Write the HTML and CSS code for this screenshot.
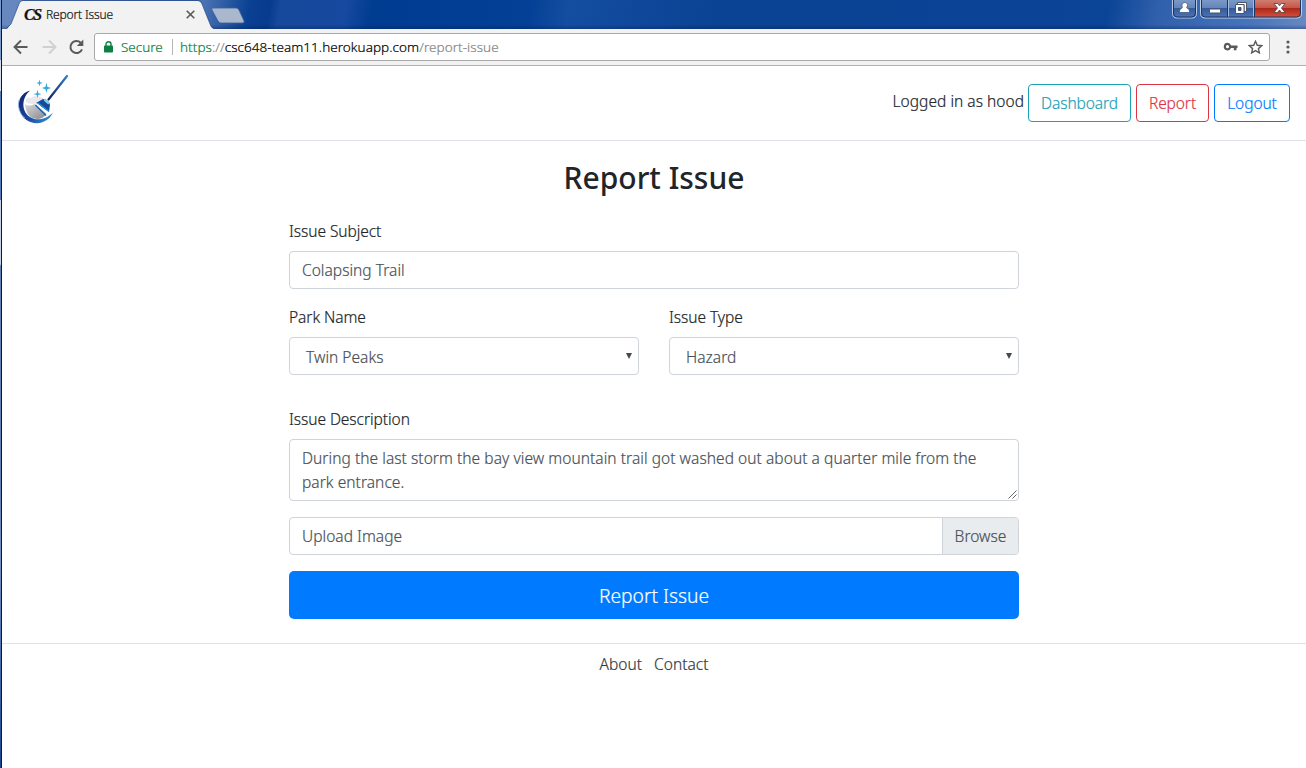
FILE: index.html
```
<!DOCTYPE html>
<html lang="en">
<head>
<meta charset="utf-8">
<title>Report Issue</title>
<link rel="stylesheet" href="styles.css">
</head>
<body>
<div class="desktop">
<div class="window">
  <div class="titlebar">
    <svg class="tabshape" width="245" height="29" viewBox="0 0 245 29" aria-hidden="true">
      <path d="M5 29L9 24L17 4C18 1 19 1 21 1H196C198 1 199 2 200 4L208 24C209 27 210 28 212 29Z" fill="#f2f2f2"/>
      <path d="M5 28L9 24L17 4Q18 .5 21 .5H196Q199 .5 200 4L208 24Q209 28 212 28.500" fill="none" stroke="#1c3e79" stroke-opacity=".6"/>
      <path d="M211 8H234Q236 8 237 10L242 21Q243 23 240 23H219Q217 23 216 21L210 10Q209 8 211 8Z" fill="#aab8cd" stroke="#3a5f9e" stroke-width=".8"/>
    </svg>
    <div class="tab">
      <span class="favicon">CS</span>
      <span class="tabtitle">Report Issue</span>
      <svg class="tabclose" width="9" height="9" viewBox="0 0 9 9"><path d="M.7 .7L8.300 8.300M8.300 .7L.7 8.300" stroke="#5a5a5a" stroke-width="1.600"/></svg>
    </div>
    <svg class="controls" width="136" height="20" viewBox="0 0 136 20">
      <defs>
        <linearGradient id="blue" x1="0" y1="0" x2="0" y2="1"><stop offset="0" stop-color="#7f9dcb"/><stop offset=".5" stop-color="#6485bb"/><stop offset=".5" stop-color="#34599b"/><stop offset="1" stop-color="#4e76b8"/></linearGradient>
        <linearGradient id="red" x1="0" y1="0" x2="0" y2="1"><stop offset="0" stop-color="#d5877b"/><stop offset=".48" stop-color="#c4574a"/><stop offset=".5" stop-color="#ab2519"/><stop offset="1" stop-color="#d9573b"/></linearGradient>
      </defs>
      <path d="M2.500 -2V13.500Q2.500 18 7 18H22Q26.500 18 26.500 13.500V-2Z" fill="url(#blue)" stroke="#b6c8e4"/>
      <path d="M3.500 -2V13Q3.500 17 7.500 17H21.500Q25.500 17 25.500 13V-2" fill="none" stroke="#183563"/>
      <path d="M30.500 -2V13.500Q30.500 18 35 18H58V-2Z M58 -2V18H85V-2Z" fill="url(#blue)"/>
      <path d="M85 -2V18H127Q131.500 18 131.500 13.500V-2Z" fill="url(#red)"/>
      <path d="M30.500 -2V13.500Q30.500 18 35 18H127Q131.500 18 131.500 13.500V-2" fill="none" stroke="#c3d0e6"/>
      <path d="M31.500 -2V13Q31.500 17 35.500 17H126.500Q130.500 17 130.500 13V-2M84.500 0V17M57.500 0V17" fill="none" stroke="#1d3765"/>
      <path d="M58.500 0V16.500M83.500 0V16.500" stroke="#a5bbdc"/>
      <path d="M12 5.500a2.800 2.800 0 1 1 4.800 1.700V8Q19.500 8.600 19.500 11V12.500H9.500V11Q9.500 8.600 12.200 8V7.200Z" fill="#fff" stroke="#354b70" stroke-width=".7"/>
      <rect x="39.500" y="9" width="11" height="4" rx=".5" fill="#fff" stroke="#4b5565"/>
      <path d="M67.500 2.500H76.500V11.500H74V4.500H67.500Z" fill="#fff" stroke="#4b5565"/>
      <path fill-rule="evenodd" d="M65.500 4.500H74V13.500H65.500ZM68.500 7.500V10.500H71V7.500Z" fill="#fff" stroke="#4b5565"/>
      <path d="M104 3.500H107.500L109.500 5.800L111.500 3.500H115L111.500 8L115 12.500H111.500L109.500 10L107.500 12.500H104L107.500 8Z" fill="#fff" stroke="#5a4550" stroke-width=".9"/>
    </svg>
  </div>
  <div class="toolbar">
    <svg class="nav" width="76" height="20" viewBox="0 0 76 20">
      <path d="M16.500 10H4M10 3.500L3.500 10L10 16.500" fill="none" stroke="#5a5a5a" stroke-width="1.900"/>
      <path d="M31.500 10H44M38 3.500L44.500 10L38 16.500" fill="none" stroke="#d0d0d0" stroke-width="1.900"/>
      <path d="M71 12.300A6 6 0 1 1 69.700 5.800" fill="none" stroke="#5a5a5a" stroke-width="2"/><path d="M72.300 2.500V9H65.800Z" fill="#5a5a5a"/>
    </svg>
    <div class="address">
      <svg class="lock" width="9" height="12" viewBox="0 0 9 12"><path d="M2 5V3.200a2.500 2.500 0 0 1 5 0V5" fill="none" stroke="#0b8043" stroke-width="1.400"/><rect x="0" y="4.500" width="9" height="7" rx=".8" fill="#0b8043"/></svg>
      <span class="secure">Secure</span>
      <span class="sep"></span>
      <span class="url"><span class="scheme">https</span><span class="dim">://</span>csc648-team11.herokuapp.com<span class="dim">/report-issue</span></span>
      <svg class="key" width="15" height="10" viewBox="0 0 15 10"><path fill-rule="evenodd" d="M4.500 .8A3.800 3.800 0 0 1 8.100 3.400H14.500V6H13.500V8.200H10.800V6H8.100A3.800 3.800 0 1 1 4.500 .8ZM4.500 3.100A1.600 1.600 0 1 0 4.500 6.300A1.600 1.600 0 0 0 4.500 3.100Z" fill="#5a5a5a"/></svg>
      <svg class="star" width="15" height="14" viewBox="0 0 15 14"><path d="M7.500 1.300L9.300 5.300L13.700 5.700L10.400 8.600L11.400 12.900L7.500 10.600L3.600 12.900L4.600 8.600L1.300 5.700L5.700 5.300Z" fill="none" stroke="#5a5a5a" stroke-width="1.400"/></svg>
    </div>
    <svg class="more" width="4" height="14" viewBox="0 0 4 14" fill="#5a5a5a"><circle cx="2" cy="2" r="1.600"/><circle cx="2" cy="7" r="1.600"/><circle cx="2" cy="12" r="1.600"/></svg>
  </div>
  <header class="header">
    <svg class="logo" width="52" height="52" viewBox="0 0 52 52">
      <defs><linearGradient id="ring" x1="0" y1="0" x2="1" y2="1"><stop offset="0" stop-color="#101f6d"/><stop offset=".6" stop-color="#1b4ba5"/><stop offset="1" stop-color="#38a3db"/></linearGradient>
      <linearGradient id="ball" x1="0" y1="0" x2="1" y2="1"><stop offset="0" stop-color="#d9d9dc"/><stop offset="1" stop-color="#85878d"/></linearGradient>
      <linearGradient id="stick" x1="0" y1="1" x2="1" y2="0"><stop offset="0" stop-color="#14235f"/><stop offset="1" stop-color="#2f7fc6"/></linearGradient></defs>
      <path d="M13 16.500C4 19 0 27 2.500 36C5.500 47 17 51.500 26 48C31 46 34 43 36 38.500C30 45 20 47.500 13 43C5 38 3.500 25 13 16.500Z" fill="url(#ring)"/>
      <path d="M2 26A17 17 0 0 0 8 44" fill="none" stroke="#7fa2d8" stroke-width=".8"/>
      <path d="M8 30Q11 33 18 30L29.500 40Q26 45 20 45Q9 44 8 30Z" fill="url(#ball)"/>
      <path d="M8.500 28Q9 22 14 24Q19 20 26 24L26 28Q15 32 8.500 28Z" fill="#e9e9ed"/>
      <path d="M19 29L26 25Q32 26 33 31L32 38Z" fill="#1c4699"/>
      <path d="M18.500 31L29 41.500" stroke="#1d62b0" stroke-width="1.500"/>
      <path d="M19.500 29.500L31 39.500" stroke="#fff" stroke-width="1.100"/>
      <path d="M21 29L32 37.500" stroke="#1f9ad0" stroke-width="1.100"/>
      <path d="M27.500 25.500L32 29.500" stroke="#72d2ee" stroke-width="2.500"/>
      <path d="M31.500 25.500L50 2" stroke="url(#stick)" stroke-width="2.200" stroke-linecap="round"/>
      <path d="M29.500 8.500L30.300 12.700L34 14L30.300 15.200L29.500 19L28.500 15.200L25 14L28.500 12.700ZM22.500 5.500L23.200 8.200L25.700 9L23.200 9.700L22.500 12.500L21.800 9.700L19.300 9L21.800 8.200ZM20.500 15.500L21.300 19.200L24.500 20L21.300 21L20.500 24L19.700 21L16.500 20L19.700 19.200Z" fill="#30aad8"/>
    </svg>
    <div class="account">
      <span class="who">Logged in as hood</span>
      <a class="btn dashboard">Dashboard</a>
      <a class="btn report">Report</a>
      <a class="btn logout">Logout</a>
    </div>
  </header>
  <main class="form">
    <h1>Report Issue</h1>
    <label>Issue Subject</label>
    <div class="field subject">Colapsing Trail</div>
    <div class="row">
      <div class="col">
        <label>Park Name</label>
        <div class="field select"><span>Twin Peaks</span><i class="arrow"></i></div>
      </div>
      <div class="col">
        <label>Issue Type</label>
        <div class="field select"><span>Hazard</span><i class="arrow"></i></div>
      </div>
    </div>
    <label class="l-desc">Issue Description</label>
    <div class="field area">During the last storm the bay view mountain trail got washed out about a quarter mile from the<br>park entrance.
      <svg class="grip" width="9" height="9" viewBox="0 0 9 9"><path d="M.5 8.500L8.500 .5M4.500 8.500L8.500 4.500" stroke="#555" stroke-width=".9"/></svg></div>
    <div class="field file"><span>Upload Image</span><div class="browse">Browse</div></div>
    <button class="submit">Report Issue</button>
  </main>
  <footer class="footer"><a>About</a><a>Contact</a></footer>
</div>
</div>
</body>
</html>
```
FILE: styles.css
```
* { box-sizing: border-box; }
body { margin: 0; font: 300 15.500px/24px "Noto Sans", sans-serif; color: #212529; overflow: hidden; -webkit-text-stroke: .2px; letter-spacing: .03px; }
.desktop { height: 768px; padding-left: 1px; background: linear-gradient(#7b9bcd 0 60px, #d5deec 60px 91px, #5a7cb4 91px 200px, #c7d2e4 200px 264px, #6180b5 266px 480px, #7592c4 560px, #1d448c 768px); }
.window { height: 768px; border-left: 1px solid #0a1936; background: #fff; display: flex; flex-direction: column; }
.titlebar { position: relative; height: 29px; flex: none; display: flex; justify-content: space-between; background: linear-gradient(rgba(0,20,70,.05) 85%, rgba(0,20,70,.35)), linear-gradient(100deg, #6c8fc6 0, #4d77b9 200px, #0a4396 245px, #063d91 265px, #174ba1 275px, #174ca4 340px, #003f94 365px, #03429a 520px, #1551a5 560px, #0b4599 700px, #0b479b 1090px, #3264b1 1140px, #4a78c1 1230px, #7495ca 1304px); }
.tabshape { position: absolute; left: 0; top: 0; }
.tab { position: relative; display: flex; align-items: center; width: 204px; padding-left: 22px; }
.favicon { width: 22px; font: italic bold 16px/28px "Liberation Serif", serif; color: #111; letter-spacing: -1.5px; }
.tabtitle { font-size: 12px; line-height: 28px; color: #111; flex: 1; letter-spacing: -.15px; }
.tabclose { margin-right: 11px; }
.toolbar { height: 37px; flex: none; display: flex; align-items: center; padding: 0 16px 0 9px; background: #f2f2f2; border-bottom: 1px solid #b0b0b0; }
.nav { flex: none; }
.address { margin-left: 7px; width: 1176px; height: 28px; margin-top: -1px; border: 1px solid #a9a9a9; border-radius: 3px; background: #fff; display: flex; align-items: center; padding: 0 6px 0 9px; font-size: 13.500px; }
.secure { color: #0b8043; margin-left: 8px; width: 51px; letter-spacing: 0; }
.sep { width: 1px; height: 16px; background: #b5b5b5; margin-right: 7px; }
.url { color: #000; flex: 1; letter-spacing: .05px; }
.scheme { color: #0b8043; }
.dim { color: #858585; }
.key { margin-right: 10px; }
.more { margin-left: auto; }
.header { height: 75px; flex: none; display: flex; justify-content: space-between; border-bottom: 1px solid #dee2e6; padding: 8px 16px 0 15px; }
.account { display: flex; padding-top: 10px; gap: 5px; }
.who { line-height: 34px; margin-right: -1px; }
.btn { height: 38px; border: 1px solid; border-radius: 4px; text-align: center; line-height: 36px; white-space: nowrap; letter-spacing: -.08px; }
.dashboard { width: 103px; color: #17a2b8; }
.report { width: 73px; color: #dc3545; }
.logout { width: 76px; color: #007bff; }
.form { width: 730px; margin-left: 287px; display: flex; flex-direction: column; }
h1 { margin: 18px 0 22px; font-size: 30px; line-height: 38px; font-weight: 500; text-align: center; letter-spacing: 0; -webkit-text-stroke: 0; }
label { display: block; height: 24px; margin-bottom: 8px; letter-spacing: -.05px; }
.field { height: 38px; border: 1px solid #ced4da; border-radius: 4px; padding: 0 12px; line-height: 36px; color: #495057; margin-bottom: 16px; white-space: nowrap; }
.row { display: flex; gap: 30px; margin-bottom: 16px; }
.col { flex: 1; }
.select { display: flex; justify-content: space-between; align-items: center; padding: 2px 6px 0 16px; }
.arrow { border: 3px solid transparent; border-top: 6px solid #444a50; border-bottom: 0; margin-top: -3px; }
.area { position: relative; height: 62px; padding-top: 6px; line-height: 24px; letter-spacing: .055px; }
.grip { position: absolute; right: 1px; bottom: 1px; }
.file { display: flex; justify-content: space-between; padding-right: 0; }
.browse { width: 76px; background: #e9ecef; border-left: 1px solid #ced4da; border-radius: 0 3px 3px 0; text-align: center; }
.submit { height: 48px; border: 0; border-radius: 5px; background: #007bff; color: #fff; font: 300 19.200px/48px "Noto Sans", sans-serif; padding: 1px 0 0; -webkit-text-stroke: .2px; }
.footer { margin-top: 24px; border-top: 1px solid #dee2e6; padding-top: 8px; display: flex; justify-content: center; gap: 12px; color: #343a40; }
```
